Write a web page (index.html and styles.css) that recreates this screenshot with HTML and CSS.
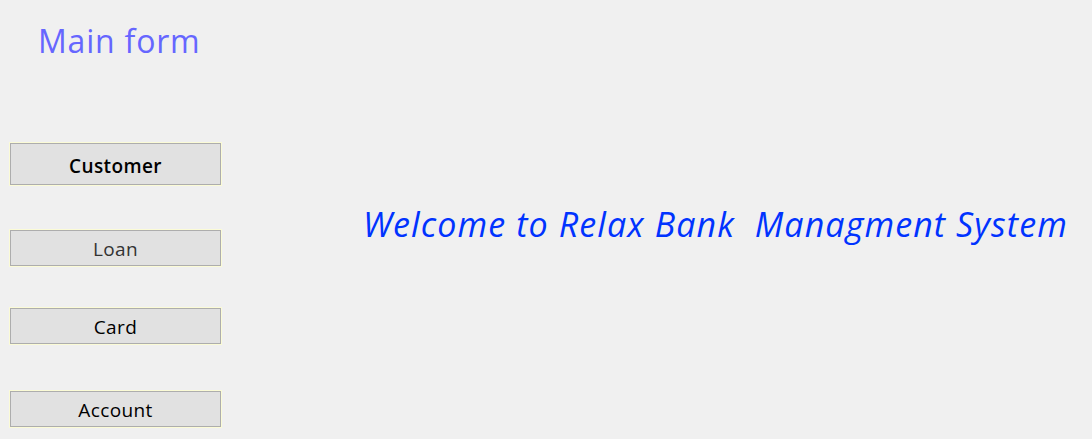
FILE: index.html
```html
<!DOCTYPE html>
<html>
<head>
<meta charset="utf-8">
<link rel="stylesheet" href="styles.css">
</head>
<body>
<div class="form">
  <div class="sidebar">
    <h1 class="title">Main form</h1>
    <div class="menu">
      <button class="btn btn-customer">Customer</button>
      <button class="btn btn-loan">Loan</button>
      <button class="btn btn-card">Card</button>
      <button class="btn btn-account">Account</button>
    </div>
  </div>
  <div class="main">
    <p class="welcome">Welcome to Relax Bank  Managment System</p>
  </div>
</div>
</body>
</html>
```
FILE: styles.css
```css
html, body {
  margin: 0;
  padding: 0;
  background: #f0f0f0;
  width: 1092px;
  height: 439px;
  overflow: hidden;
  font-family: "Open Sans", "Noto Sans", sans-serif;
}
.form {
  display: flex;
  height: 439px;
}
.sidebar {
  width: 340px;
  display: flex;
  flex-direction: column;
}
.title {
  margin: 20px 0 0 38px;
  font-size: 32px;
  font-weight: 400;
  letter-spacing: 0.8px;
  line-height: 42px;
  color: #6666ff;
}
.menu {
  display: flex;
  flex-direction: column;
  padding-left: 10px;
}
.btn {
  width: 211px;
  height: 36px;
  box-sizing: border-box;
  border: 1px solid #adadad;
  box-shadow: 0 0 0 1px #fbfbd6;
  background: #e1e1e1;
  font-family: "Open Sans", "Noto Sans", sans-serif;
  font-size: 19px;
  letter-spacing: 0.4px;
  color: #000;
  padding: 1px 0 0 0;
  margin: 0;
}
.btn-customer {
  height: 42px;
  margin-top: 81px;
  padding-top: 4px;
  font-weight: 600;
}
.btn-loan {
  margin-top: 45px;
  color: #333;
}
.btn-card {
  margin-top: 42px;
}
.btn-account {
  margin-top: 47px;
}
.main {
  flex: 1;
  display: flex;
  align-items: center;
}
.welcome {
  margin: 0 0 0 23px;
  padding-top: 8px;
  white-space: pre;
  font-style: italic;
  font-size: 34px;
  letter-spacing: 1.1px;
  color: #0033ff;
}
```
